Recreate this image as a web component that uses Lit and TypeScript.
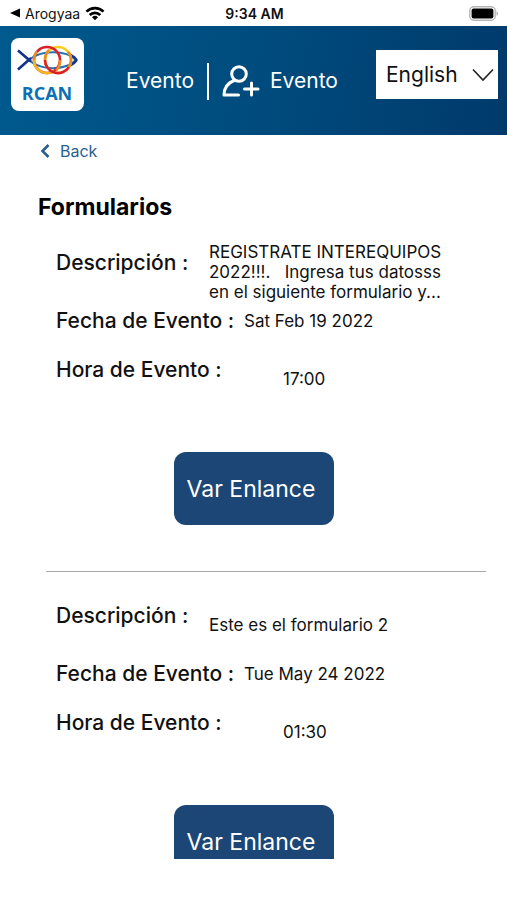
import { LitElement, html, css } from "lit";
import { customElement, property } from "lit/decorators.js";

interface FormEntry {
  description: string;
  date: string;
  time: string;
}

const entries: FormEntry[] = [
  {
    description:
      "REGISTRATE INTEREQUIPOS 2022!!!.   Ingresa tus datosss en el siguiente formulario y...",
    date: "Sat Feb 19 2022",
    time: "17:00",
  },
  { description: "Este es el formulario 2", date: "Tue May 24 2022", time: "01:30" },
];

@customElement("status-bar")
export class StatusBar extends LitElement {
  static styles = css`
    :host {
      display: grid;
      grid-template-columns: 1fr auto 1fr;
      align-items: center;
      height: 26px;
      padding: 0 8px 0 10px;
      box-sizing: border-box;
      background: #fff;
      color: #111;
      font-size: 14px;
    }
    .app {
      display: flex;
      align-items: center;
      gap: 5px;
    }
    .time {
      font-weight: 600;
    }
    .battery {
      justify-self: end;
    }
    svg {
      display: block;
    }
  `;

  render() {
    return html`
      <div class="app">
        <svg width="10" height="10" viewBox="0 0 10 10"><path d="M0 5 10 .5v9z" fill="#000" /></svg>
        <span>Arogyaa</span>
        <svg width="20" height="15" viewBox="0 0 20 15" fill="none" stroke="#000" stroke-width="2.6">
          <path d="M1.5 5.6a12.2 12.2 0 0 1 17 0" />
          <path d="M4.7 9a7.6 7.6 0 0 1 10.6 0" />
          <path d="M10 14.2 7 11.3a4.3 4.3 0 0 1 6 0z" fill="#000" stroke="none" />
        </svg>
      </div>
      <div class="time">9:34 AM</div>
      <svg class="battery" width="30" height="15" viewBox="0 0 30 15">
        <rect x=".8" y=".8" width="25.4" height="13.4" rx="4" fill="#fff" stroke="#b5b5b5" stroke-width="1.4" />
        <rect x="2.6" y="2.6" width="21.8" height="9.8" rx="2" fill="#000" />
        <path d="M27.5 5.2c2 .6 2 4 0 4.6z" fill="#b5b5b5" />
      </svg>
    `;
  }
}

@customElement("app-header")
export class AppHeader extends LitElement {
  static styles = css`
    :host {
      display: flex;
      align-items: flex-start;
      justify-content: space-between;
      height: 109px;
      padding: 12px 9px 0 11px;
      box-sizing: border-box;
      background: linear-gradient(100deg, #005a8e, #004a7c 55%, #003a6b);
    }
    .logo {
      width: 73px;
      height: 73px;
      border-radius: 8px;
      background: #fff;
    }
    svg {
      display: block;
    }
    .wordmark {
      font: 700 18px "Open Sans", sans-serif;
      fill: #0d6fb4;
    }
    nav {
      display: flex;
      align-items: center;
      gap: 13px;
      padding: 24px 0 0 4px;
    }
    a {
      display: flex;
      align-items: center;
      gap: 10px;
      color: #fff;
      font-size: 21px;
      line-height: 38px;
      text-decoration: none;
    }
    .divider {
      width: 2px;
      height: 37px;
      background: #fff;
    }
    .language {
      display: grid;
      align-items: center;
      margin-top: 12px;
    }
    select {
      grid-area: 1 / 1;
      width: 122px;
      height: 49px;
      padding: 0 10px;
      border: 0;
      border-radius: 0;
      appearance: none;
      background: #fff;
      color: #111;
      font: 21px Inter, sans-serif;
    }
    .chevron {
      grid-area: 1 / 1;
      justify-self: end;
      margin-right: 4px;
      pointer-events: none;
    }
  `;

  render() {
    return html`
      <svg class="logo" viewBox="0 0 73 73" fill="none" role="img" aria-label="RCAN">
        <path d="M7 31.500C15 25 21 15.500 38 14.500 53 13.500 60 17 65 22" stroke="#2572b5" stroke-width="2" />
        <path d="M7 12.500C15 19 21 28.500 38 30 53 31 60 27 65 22" stroke="#2572b5" stroke-width="2" />
        <path d="M7 12.500 20 23.500M7 31.500 20 20M59 16.500q5 2.500 6.500 5.500-1.500 3-6.500 5.500" stroke="#15348e" stroke-width="2.500" />
        <circle cx="47" cy="22" r="13" stroke="#f6cf1c" stroke-width="2.600" />
        <circle cx="36" cy="22" r="13" stroke="#dc2027" stroke-width="2.600" />
        <path d="M23 22a13 13 0 0 0 20 11" stroke="#f5b51e" stroke-width="2.600" />
        <path d="M34 22a13 13 0 0 0 24 7" stroke="#dc2027" stroke-width="2.600" />
        <path d="M34 22q0-6 4-10M49 22q0 7-4 10.500M60 22q0-5-3-8.500M58 29q2-3 2-7M23 22q0-5 3-8.500" stroke="#ef8a20" stroke-width="2.600" />
        <text class="wordmark" x="36" y="62" text-anchor="middle">RCAN</text>
      </svg>
      <nav>
        <a href="#evento">Evento</a>
        <span class="divider"></span>
        <a href="#registro">
          <svg width="38" height="32" viewBox="0 0 38 32" fill="none" stroke="#fff" stroke-width="3" stroke-linecap="round" stroke-linejoin="round">
            <circle cx="17" cy="9" r="7.300" />
            <path d="M12 15.500C6 18 2 22 2 30h14.500M29.500 18v12M22.500 24h13.500" />
          </svg>
          Evento
        </a>
      </nav>
      <div class="language">
        <select aria-label="Language">
          <option>English</option>
          <option>Español</option>
        </select>
        <svg class="chevron" width="22" height="14" viewBox="0 0 22 14" fill="none" stroke="#222" stroke-width="1.600">
          <path d="M1 1.500 11 12 21 1.500" />
        </svg>
      </div>
    `;
  }
}

@customElement("form-card")
export class FormCard extends LitElement {
  @property({ attribute: false }) entry!: FormEntry;

  static styles = css`
    :host {
      display: flex;
      flex-direction: column;
      margin: 0 21px 0 46px;
      padding: 19px 0 46px 10px;
      color: #111;
    }
    dl {
      margin: 0;
    }
    .row {
      display: flex;
      align-items: center;
      height: 64px;
    }
    .row.date {
      height: 34px;
      margin-bottom: 9px;
      gap: 10px;
    }
    dt {
      flex: none;
      width: 153px;
      padding-bottom: 18px;
      font-size: 21px;
      font-weight: 500;
      line-height: 28px;
      white-space: nowrap;
    }
    .date dt {
      width: auto;
      padding-bottom: 0;
    }
    dd {
      margin: 0;
      max-width: 236px;
      font-size: 17px;
      line-height: 20px;
      white-space: pre-wrap;
    }
    .time dd {
      padding-left: 74px;
    }
    button {
      align-self: center;
      margin: 41px 34px 0 0;
      padding: 0 19px 0 13px;
      height: 73px;
      border: 0;
      border-radius: 12px;
      background: #1c4675;
      color: #fff;
      font: 23px Inter, sans-serif;
      cursor: pointer;
    }
  `;

  render() {
    return html`
      <dl>
        <div class="row"><dt>Descripción :</dt><dd>${this.entry.description}</dd></div>
        <div class="row date"><dt>Fecha de Evento :</dt><dd>${this.entry.date}</dd></div>
        <div class="row time"><dt>Hora de Evento :</dt><dd>${this.entry.time}</dd></div>
      </dl>
      <button type="button">Var Enlance</button>
    `;
  }
}

@customElement("app-root")
export class AppRoot extends LitElement {
  static styles = css`
    :host {
      display: flex;
      flex-direction: column;
      height: 100vh;
      padding-bottom: 41px;
      box-sizing: border-box;
      background: #fff;
      font-family: Inter, sans-serif;
    }
    status-bar,
    app-header {
      flex: none;
    }
    main {
      flex: 1;
      min-height: 0;
      overflow: hidden;
    }
    .back {
      display: inline-flex;
      align-items: center;
      gap: 10px;
      margin-left: 40px;
      color: #2a5f8f;
      font-size: 16px;
      line-height: 32px;
      text-decoration: none;
    }
    h1 {
      margin: 26px 0 0 38px;
      color: #000;
      font-size: 23px;
      font-weight: 700;
      line-height: 28px;
    }
    hr {
      margin: 0 21px 2px 46px;
      border: 0;
      border-top: 1px solid #a8a8a8;
    }
  `;

  render() {
    return html`
      <status-bar></status-bar>
      <app-header></app-header>
      <main>
        <a class="back" href="#back">
          <svg width="10" height="14" viewBox="0 0 10 14" fill="none" stroke="#2a5f8f" stroke-width="2.600">
            <path d="M8.500 1 2.500 7l6 6" />
          </svg>
          Back
        </a>
        <h1>Formularios</h1>
        ${entries.map(
          (entry, i) => html`${i > 0 ? html`<hr />` : null}<form-card .entry=${entry}></form-card>`,
        )}
      </main>
    `;
  }
}
